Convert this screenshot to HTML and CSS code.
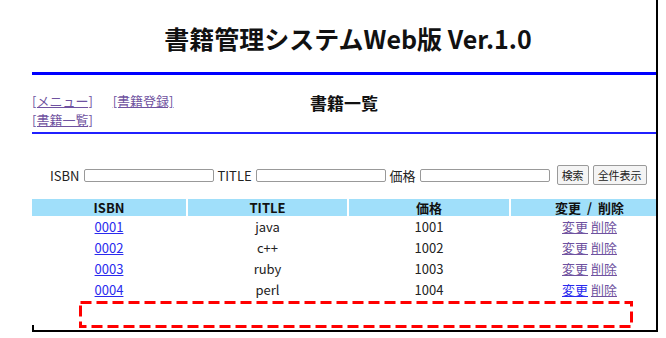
FILE: index.html
```html
<!DOCTYPE html>
<html lang="ja">
<head>
    <meta charset="UTF-8">
    <title>書籍一覧</title>
    <link rel="stylesheet" href="styles.css">
</head>
<body>
    <div class="frame">
        <div class="site-title">書籍管理システムWeb版 Ver.1.0</div>
        <div class="rule-thick"></div>

        <div class="sub-header">
            <div class="nav">
                <a href="#" class="visited nav-gap">[メニュー]</a>
                <a href="#" class="visited">[書籍登録]</a>
                <a href="#" class="visited">[書籍一覧]</a>
            </div>
            <h1 class="page-title">書籍一覧</h1>
        </div>
        <div class="rule-thin"></div>

        <form class="search">
            <label>ISBN</label>
            <input type="text" class="field">
            <label>TITLE</label>
            <input type="text" class="field">
            <label>価格</label>
            <input type="text" class="field">
            <button type="button" class="btn btn-first">検索</button>
            <button type="button" class="btn">全件表示</button>
        </form>

        <div class="book-table">
            <div class="th">ISBN</div>
            <div class="th">TITLE</div>
            <div class="th">価格</div>
            <div class="th last">変更 &nbsp;/ &nbsp;削除</div>

            <div class="td"><a href="#" class="link">0001</a></div>
            <div class="td">java</div>
            <div class="td">1001</div>
            <div class="td last"><a href="#" class="visited">変更</a> <a href="#" class="visited">削除</a></div>

            <div class="td"><a href="#" class="link">0002</a></div>
            <div class="td">c++</div>
            <div class="td">1002</div>
            <div class="td last"><a href="#" class="visited">変更</a> <a href="#" class="visited">削除</a></div>

            <div class="td"><a href="#" class="link">0003</a></div>
            <div class="td">ruby</div>
            <div class="td">1003</div>
            <div class="td last"><a href="#" class="visited">変更</a> <a href="#" class="visited">削除</a></div>

            <div class="td"><a href="#" class="link">0004</a></div>
            <div class="td">perl</div>
            <div class="td">1004</div>
            <div class="td last"><a href="#" class="link">変更</a> <a href="#" class="visited">削除</a></div>
        </div>

        <div class="footer">
            <div class="tick"></div>
            <svg class="mark" width="554" height="27" viewBox="0 0 554 27">
                <rect x="1.5" y="1.5" width="551" height="24" fill="none" stroke="#ff0000" stroke-width="3" stroke-dasharray="11 5"/>
            </svg>
        </div>
    </div>
</body>
</html>
```

FILE: styles.css
```css
* {
    margin: 0;
    padding: 0;
    box-sizing: border-box;
}

body {
    font-family: "Noto Sans CJK JP", sans-serif;
    background: #ffffff;
    color: #222;
}

.frame {
    width: 626px;
    margin-left: 32px;
    border-right: 2px solid #000;
    border-bottom: 2px solid #000;
}

.site-title {
    height: 72px;
    padding-top: 4px;
    padding-left: 8px;
    display: flex;
    align-items: center;
    justify-content: center;
    font-size: 25px;
    font-weight: bold;
    color: #111;
}

.rule-thick {
    height: 3px;
    background: #0000ff;
}

.rule-thin {
    height: 2px;
    background: #2020ff;
}

.sub-header {
    display: grid;
    grid-template-columns: 1fr auto 1fr;
    padding-top: 16px;
    padding-bottom: 3px;
}

.nav {
    max-width: 150px;
    font-size: 13px;
    line-height: 19px;
}

.nav-gap {
    margin-right: 17px;
}

.page-title {
    font-size: 17px;
    line-height: 24px;
    font-weight: bold;
    color: #111;
}

a.visited {
    color: #6f52a0;
}

a.link {
    color: #2a2aee;
}

.search {
    display: flex;
    align-items: center;
    gap: 4px;
    margin-top: 31px;
    padding-left: 18px;
    height: 20px;
    font-size: 13px;
}

.field {
    width: 130px;
    height: 13px;
    border: 1px solid #999;
    border-radius: 2px;
    background: #fff;
}

.btn {
    height: 20px;
    padding: 0 4px;
    font-family: "Noto Sans CJK JP", sans-serif;
    font-size: 11px;
    color: #222;
    background: #f4f4f4;
    border: 1px solid #9a9a9a;
    border-radius: 2px;
}

.btn-first {
    margin-left: 3px;
}

.book-table {
    display: grid;
    grid-template-columns: 154px 159px 160px 1fr;
    column-gap: 2px;
    margin-top: 14px;
    font-size: 13px;
    text-align: center;
}

.th {
    height: 17px;
    line-height: 17px;
    background: #a0dffa;
    font-size: 13px;
    font-weight: bold;
    color: #111;
}

.td {
    height: 21px;
    line-height: 21px;
}

.last {
    padding-left: 12px;
}

.footer {
    display: flex;
    align-items: flex-end;
    margin-top: 2px;
    height: 28px;
}

.tick {
    width: 0;
    height: 5px;
    border-left: 2px solid #000;
}

.mark {
    display: block;
    margin-left: 45px;
    margin-bottom: 2px;
}
```
